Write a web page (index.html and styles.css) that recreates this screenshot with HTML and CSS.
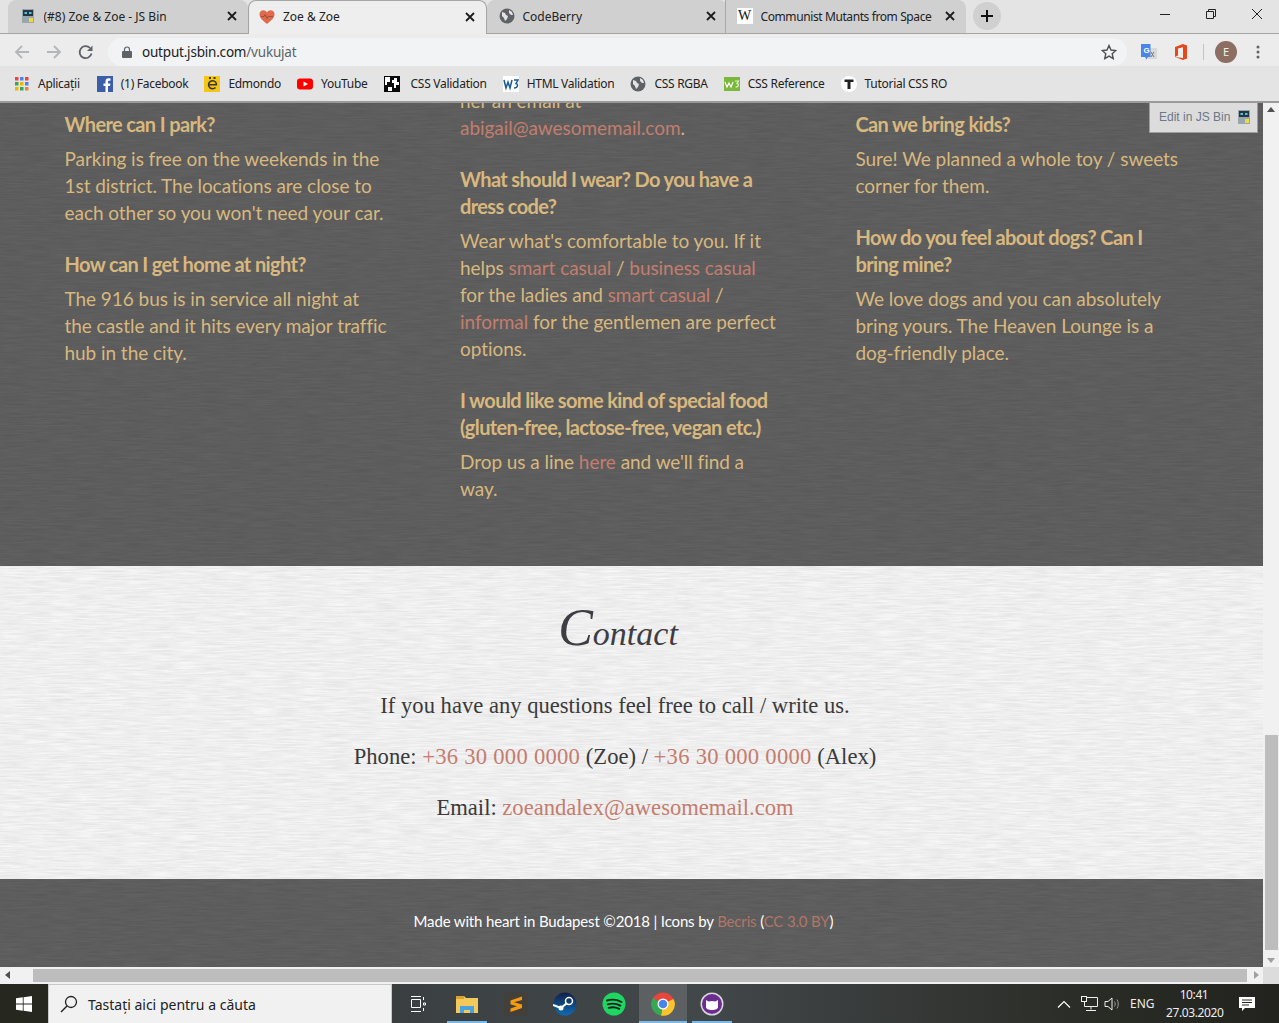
FILE: index.html
```html
<!DOCTYPE html>
<html lang="en">
<head>
<meta charset="utf-8">
<title>Zoe &amp; Zoe</title>
<link rel="stylesheet" href="styles.css">
</head>
<body>
<svg class="defs" width="0" height="0" aria-hidden="true">
  <defs>
    <filter id="paper" x="0" y="0" width="100%" height="100%">
      <feTurbulence type="fractalNoise" baseFrequency="0.04 0.6" numOctaves="3" seed="4"/>
      <feColorMatrix type="matrix" values="0 0 0 0 0  0 0 0 0 0  0 0 0 0 0  0.14 0 0 0 -0.03"/>
    </filter>
    <symbol id="globe" viewBox="0 0 16 16"><circle cx="8" cy="8" r="7.5" fill="#5f6368"/><path d="M3 4l3 1 1 2 2 1-1 3-2 2-1-3-2-2zM10 2l3 2 1 3-2 0-2-2z" fill="#e4e4e4"/></symbol>
    <symbol id="jsbin" viewBox="0 0 16 16"><rect x="2" y="1" width="12" height="14" fill="#98a6ae"/><rect x="3" y="2" width="10" height="6" fill="#26373f"/><rect x="4.500" y="4" width="2.500" height="2" fill="#4fc3e8"/><rect x="9" y="4" width="2.500" height="2" fill="#4fc3e8"/><rect x="9" y="10" width="4" height="4" fill="#f3d648"/></symbol>
    <symbol id="close" viewBox="0 0 10 10"><path d="M1 1l8 8M9 1l-8 8" stroke="#1c1c1c" stroke-width="1.800" fill="none"/></symbol>
  </defs>
</svg>
<div class="tabstrip">
  <div class="tab">
    <svg class="fav"><use href="#jsbin"/></svg>
    <span class="tab-title">(#8) Zoe &amp; Zoe - JS Bin</span>
    <svg class="tab-x"><use href="#close"/></svg>
  </div>
  <div class="tab tab-active">
    <svg class="fav" viewBox="0 0 16 16"><path d="M8 15C3 11 .5 8.500 .5 5.200 .5 2.800 2.300 1.200 4.300 1.200 5.800 1.200 7.200 2 8 3.300 8.800 2 10.200 1.200 11.700 1.200 13.700 1.200 15.500 2.800 15.500 5.200 15.500 8.500 13 11 8 15z" fill="#df6a4e"/><path d="M2 7.500h3l1-2 2 4 1-2h5" stroke="#8a4a3a" stroke-width=".8" fill="none"/></svg>
    <span class="tab-title">Zoe &amp; Zoe</span>
    <svg class="tab-x"><use href="#close"/></svg>
  </div>
  <div class="tab">
    <svg class="fav"><use href="#globe"/></svg>
    <span class="tab-title">CodeBerry</span>
    <svg class="tab-x"><use href="#close"/></svg>
  </div>
  <div class="tab tab-sep">
    <span class="fav fav-w">W</span>
    <span class="tab-title tab-tight">Communist Mutants from Space</span>
    <svg class="tab-x"><use href="#close"/></svg>
  </div>
  <div class="newtab"><svg viewBox="0 0 12 12" width="12" height="12"><path d="M6 0v12M0 6h12" stroke="#111" stroke-width="2"/></svg></div>
  <div class="winctl">
    <svg viewBox="0 0 46 16" class="winbtn"><path d="M18 8.500h10" stroke="#222" fill="none"/></svg>
    <svg viewBox="0 0 46 16" class="winbtn"><path d="M18.500 5.500h7v7h-7zM20.500 5V3.500h7v7H26" stroke="#222" fill="none"/></svg>
    <svg viewBox="0 0 46 16" class="winbtn"><path d="M18 3l10 10M28 3L18 13" stroke="#222" fill="none"/></svg>
  </div>
</div>
<div class="toolbar">
  <svg class="nav-ic" viewBox="0 0 16 16"><path d="M15 8H2M8 2L2 8l6 6" stroke="#b4b6b8" stroke-width="1.800" fill="none"/></svg>
  <svg class="nav-ic" viewBox="0 0 16 16"><path d="M1 8h13M8 2l6 6-6 6" stroke="#b4b6b8" stroke-width="1.800" fill="none"/></svg>
  <svg class="nav-ic" viewBox="0 0 16 16"><path d="M13.500 9.500A6 6 0 1 1 12 4" stroke="#5f6368" stroke-width="1.800" fill="none"/><path d="M14.500 1.500v5.500H9z" fill="#5f6368"/></svg>
  <div class="omnibox">
    <svg class="lock" viewBox="0 0 10 12"><path d="M2.500 5V3.500a2.500 2.500 0 0 1 5 0V5" stroke="#5f6368" stroke-width="1.200" fill="none"/><rect y="5" width="10" height="7" rx="1" fill="#5f6368"/></svg>
    <span class="url">output.jsbin.com<span class="url-path">/vukujat</span></span>
    <svg class="star" viewBox="0 0 16 16"><path d="M8 1.500l2 4.500 4.800.5-3.600 3.200 1 4.800L8 12.100 3.800 14.500l1-4.800L1.200 6.500 6 6z" stroke="#4d4f52" stroke-width="1.400" fill="none"/></svg>
  </div>
  <div class="ext">
    <svg class="ext-ic" viewBox="0 0 16 16"><rect x="7" y="4" width="9" height="11" fill="#d8d8d8"/><path d="M10 8l3 5M13 8l-3 5" stroke="#777" fill="none"/><path d="M0 0h9.500v13H7l-1.500 2.500L4 13H0z" fill="#4a86e8"/><text x="2.500" y="9" class="ext-g">G</text></svg>
    <svg class="ext-ic ext-office" viewBox="0 0 14 16"><path d="M1 3l8-3 4 1.500v13L9 16l-8-3 8 1V3.200L4 4.500v7L1 13z" fill="#e3491c"/></svg>
    <span class="ext-sep"></span>
    <span class="avatar">E</span>
    <svg class="menu" viewBox="0 0 4 16"><circle cx="2" cy="3" r="1.500" fill="#5f6368"/><circle cx="2" cy="8" r="1.500" fill="#5f6368"/><circle cx="2" cy="13" r="1.500" fill="#5f6368"/></svg>
  </div>
</div>
<div class="bookmarks">
  <div class="bm"><svg class="bm-ic bm-grid" viewBox="0 0 14 14"><g><rect width="3.500" height="3.500" fill="#e8453c"/><rect x="5" width="3.500" height="3.500" fill="#4a86e8"/><rect x="10" width="3.500" height="3.500" fill="#e8453c"/><rect y="5" width="3.500" height="3.500" fill="#34a853"/><rect x="5" y="5" width="3.500" height="3.500" fill="#f5b400"/><rect x="10" y="5" width="3.500" height="3.500" fill="#4a86e8"/><rect y="10" width="3.500" height="3.500" fill="#f5b400"/><rect x="5" y="10" width="3.500" height="3.500" fill="#34a853"/><rect x="10" y="10" width="3.500" height="3.500" fill="#e8853c"/></g></svg><span class="bm-first">Aplicații</span></div>
  <div class="bm"><svg class="bm-ic" viewBox="0 0 16 16"><rect width="16" height="16" fill="#3b5ea8"/><path d="M11 16V10h2l.4-2.500H11V6c0-.8.300-1.300 1.300-1.300h1.200V2.500C13 2.400 12.300 2.300 11.500 2.300 9.700 2.300 8.500 3.400 8.500 5.500v2H6.500V10h2v6z" fill="#fff"/></svg>(1) Facebook</div>
  <div class="bm"><svg class="bm-ic" viewBox="0 0 16 16"><rect width="16" height="16" fill="#f5c518"/><path d="M11.500 11.500a4 4 0 1 1 0-5.500c.7.900 1 1.700.9 2.800H4.500" stroke="#3a3a1a" stroke-width="1.600" fill="none"/><path d="M5 1h2v2H5zM9.500 1h2v2h-2z" fill="#3a3a1a"/></svg>Edmondo</div>
  <div class="bm"><svg class="bm-ic" viewBox="0 0 16 16"><rect y="2.500" width="16" height="11" rx="3" fill="#f00"/><path d="M6.500 5.500v5L11 8z" fill="#fff"/></svg>YouTube</div>
  <div class="bm bm-wide"><svg class="bm-ic" viewBox="0 0 16 16"><rect width="16" height="16" fill="#0a0a0a"/><path d="M1 1h5v5H3v3H1zM10 2h3v4h2v3h-3v3h-2V7H8V4h2zM4 11h4v4H4z" fill="#fff"/></svg>CSS Validation</div>
  <div class="bm"><svg class="bm-ic" viewBox="0 0 16 16"><rect width="16" height="16" fill="#fff"/><path d="M1 4l2 8 2-6 2 6 2-8M11 4h4l-2 3.500c2 0 2.500 4.500-2 4.500" stroke="#1a5a96" stroke-width="1.500" fill="none"/></svg>HTML Validation</div>
  <div class="bm"><svg class="bm-ic" viewBox="0 0 16 16"><use href="#globe"/></svg>CSS RGBA</div>
  <div class="bm"><svg class="bm-ic" viewBox="0 0 16 16"><rect y="1" width="16" height="14" fill="#7cb83c"/><path d="M1 6l2 5 2-4 2 4 2-5" stroke="#fff" stroke-width="1.200" fill="none"/><path d="M11 5h3.500l-1.500 2.500c2 0 2 4-1.500 3.500" stroke="#e4f0d0" stroke-width="1.200" fill="none"/></svg>CSS Reference</div>
  <div class="bm"><svg class="bm-ic" viewBox="0 0 16 16"><circle cx="8" cy="8" r="8" fill="#fff"/><path d="M3.500 3.500h9v2.500h-3v7h-3V6h-3z" fill="#222"/></svg>Tutorial CSS RO</div>
</div>
<div class="browser">
  <div class="viewport">
    <main class="page">
      <section class="faq">
        <svg class="texture"><rect width="100%" height="100%" filter="url(#paper)"/></svg>
        <div class="faq-col faq-col-offset">
          <h3 class="q">Where can I park?</h3>
          <p class="a">Parking is free on the weekends in the<br>1st district. The locations are close to<br>each other so you won't need your car.</p>
          <h3 class="q">How can I get home at night?</h3>
          <p class="a">The 916 bus is in service all night at<br>the castle and it hits every major traffic<br>hub in the city.</p>
        </div>
        <div class="faq-col">
          <p class="a">her an email at<br><a class="link" href="#">abigail@awesomemail.com</a>.</p>
          <h3 class="q">What should I wear? Do you have a<br>dress code?</h3>
          <p class="a">Wear what's comfortable to you. If it<br>helps <a class="link" href="#">smart casual</a> / <a class="link" href="#">business casual</a><br>for the ladies and <a class="link" href="#">smart casual</a> /<br><a class="link" href="#">informal</a> for the gentlemen are perfect<br>options.</p>
          <h3 class="q">I would like some kind of special food<br>(gluten-free, lactose-free, vegan etc.)</h3>
          <p class="a">Drop us a line <a class="link" href="#">here</a> and we'll find a<br>way.</p>
        </div>
        <div class="faq-col faq-col-offset">
          <h3 class="q">Can we bring kids?</h3>
          <p class="a">Sure! We planned a whole toy / sweets<br>corner for them.</p>
          <h3 class="q">How do you feel about dogs? Can I<br>bring mine?</h3>
          <p class="a">We love dogs and you can absolutely<br>bring yours. The Heaven Lounge is a<br>dog-friendly place.</p>
        </div>
      </section>
      <section class="contact">
        <svg class="texture texture-light"><rect width="100%" height="100%" filter="url(#paper)"/></svg>
        <h2 class="contact-title"><span class="contact-c">C</span>ontact</h2>
        <p class="contact-line">If you have any questions feel free to call / write us.</p>
        <p class="contact-line">Phone: <a class="link phone" href="#">+36 30 000 0000</a> (Zoe) / <a class="link phone" href="#">+36 30 000 0000</a> (Alex)</p>
        <p class="contact-line">Email: <a class="link" href="#">zoeandalex@awesomemail.com</a></p>
      </section>
      <footer class="foot">
        <svg class="texture"><rect width="100%" height="100%" filter="url(#paper)"/></svg>
        <p class="foot-text">Made with heart in Budapest ©2018 | Icons by <a class="foot-link" href="#">Becris</a> (<a class="foot-link" href="#">CC 3.0 BY</a>)</p>
      </footer>
    </main>
    <div class="jsbin-edit">Edit in JS Bin<svg class="jsbin-ic"><use href="#jsbin"/></svg></div>
  </div>
  <div class="vbar">
    <span class="arrow arrow-up"></span>
    <span class="vthumb"></span>
    <span class="arrow arrow-down"></span>
  </div>
  <div class="hbar">
    <span class="arrow arrow-left"></span>
    <span class="hthumb"></span>
    <span class="arrow arrow-right"></span>
  </div>
  <div class="corner"></div>
</div>
<div class="taskbar">
  <div class="start"><svg viewBox="0 0 16 16" width="16" height="16"><path d="M0 2.300l6.800-1v6.300H0zM7.600 1.200L16 0v7.600H7.600zM0 8.400h6.800v6.400l-6.800-1zM7.600 8.400H16V16l-8.400-1.200z" fill="#fff"/></svg></div>
  <div class="search">
    <svg viewBox="0 0 18 18" width="18" height="18"><circle cx="11" cy="7" r="5.500" stroke="#222" stroke-width="1.300" fill="none"/><path d="M7 11l-6 6" stroke="#222" stroke-width="1.500"/></svg>
    <span>Tastați aici pentru a căuta</span>
  </div>
  <div class="tb-icons">
    <div class="tb-icon"><svg viewBox="0 0 16 16" width="16" height="16"><path d="M1 .5h10M1 15.500h10M1.500 3.500h9v8h-9zM13.500 1v3M13.500 7h2v2h-2zM13.500 12v3" stroke="#fff" fill="none"/></svg></div>
    <div class="tb-icon tb-on"><svg viewBox="0 0 22 18" width="22" height="18"><path d="M0 1h8l2 2h12v15H0z" fill="#f3c95c"/><path d="M0 1h8v3H0z" fill="#d9a12e"/><path d="M4 11h14v7h-4v-3H8v3H4z" fill="#4aa3e0"/></svg></div>
    <div class="tb-icon"><svg viewBox="0 0 24 24" width="24" height="24"><rect width="24" height="24" rx="1" fill="#43403c"/><path d="M18 4.500L6.500 8.500v3.800l11.500 3.800v-3.500L10 10.300l8-2.300zM18 12.500L6.500 16.500v3.500L18 16z" fill="#f79a10"/></svg></div>
    <div class="tb-icon"><svg viewBox="0 0 24 24" width="24" height="24"><defs><linearGradient id="st" x1="0" y1="0" x2="0" y2="1"><stop offset="0" stop-color="#12204a"/><stop offset="1" stop-color="#0f6bb0"/></linearGradient></defs><circle cx="12" cy="12" r="11.500" fill="url(#st)"/><circle cx="16" cy="9" r="3.500" fill="none" stroke="#fff" stroke-width="1.500"/><circle cx="8" cy="16" r="2.500" fill="#fff"/><path d="M0 13l8 3 6-5" stroke="#fff" stroke-width="2" fill="none"/></svg></div>
    <div class="tb-icon"><svg viewBox="0 0 24 24" width="24" height="24"><circle cx="12" cy="12" r="11.500" fill="#1ed760"/><path d="M5 8.500c5-1.500 10-1 14.500 1.500M5.800 12.300c4.500-1.200 8.700-.8 12.500 1.300M6.700 15.800c3.800-1 7.300-.7 10.500 1" stroke="#122" stroke-width="1.900" fill="none" stroke-linecap="round"/></svg></div>
    <div class="tb-icon tb-active"><svg viewBox="0 0 24 24" width="24" height="24"><circle cx="12" cy="12" r="11.500" fill="#e8453c"/><path d="M12 12L22.500 7A11.500 11.500 0 0 1 10 23.500z" fill="#f7c42f"/><path d="M12 12L10 23.500A11.500 11.500 0 0 1 2 6z" fill="#34a853"/><circle cx="12" cy="12" r="5.500" fill="#fff"/><circle cx="12" cy="12" r="4.300" fill="#4a86e8"/></svg></div>
    <div class="tb-icon tb-on"><svg viewBox="0 0 24 24" width="24" height="24"><circle cx="12" cy="12" r="11.500" fill="#d8d8d8"/><circle cx="12" cy="12" r="10" fill="#6e2c91"/><path d="M6 8l2.500 1.500c2-.7 5-.7 7 0L18 8v7c0 2-2.500 3-6 3s-6-1-6-3z" fill="#fff"/></svg></div>
  </div>
  <div class="tray">
    <svg class="tray-chev" viewBox="0 0 14 8" width="14" height="8"><path d="M1 7.500L7 1.500l6 6" stroke="#fff" stroke-width="1.200" fill="none"/></svg>
    <svg class="tray-net" viewBox="0 0 17 16" width="17" height="16"><path d="M3.500 1.500h13v9h-13zM10 10.500v3M5 14.500h10" stroke="#eee" fill="none"/><rect x=".5" y=".5" width="5" height="5" fill="#26261f" stroke="#eee"/></svg>
    <svg class="tray-vol" viewBox="0 0 17 16" width="17" height="16"><path d="M1 5.500h3l4-3.500v12l-4-3.500H1z" stroke="#eee" fill="none"/><path d="M10.500 5.500c1 1.500 1 3.500 0 5M13 3.500c1.700 2.500 1.700 6.500 0 9" stroke="#999" fill="none"/></svg>
    <span class="tray-lang">ENG</span>
    <span class="tray-time">10:41<br>27.03.2020</span>
    <svg class="tray-note" viewBox="0 0 16 16" width="16" height="16"><path d="M0 1h16v11H6l-3 3v-3H0z" fill="#fff"/><path d="M3 4h10M3 6.500h10M3 9h7" stroke="#26261f"/></svg>
  </div>
</div>
</body>
</html>
```
FILE: styles.css
```css
* { box-sizing: border-box; }
html, body { margin: 0; padding: 0; }
body { width: 1279px; height: 1023px; overflow: hidden; font-family: "Noto Sans", "Open Sans", sans-serif; background: #e4e4e4; }
.defs { position: absolute; }

/* tab strip */
.tabstrip { height: 34px; display: flex; align-items: flex-end; padding-left: 8px; background: #e4e4e4; border-bottom: 1px solid #a5a5a5; }
.tab { width: 239.500px; height: 33px; display: flex; align-items: center; padding: 0 10px 1px 11.500px; background: #d0d0d0; font-size: 12px; color: #222; border-radius: 8px 8px 0 0; }
.tab-active { background: #eeeeee; height: 34px; margin-bottom: -1px; border: 1px solid #a5a5a5; border-bottom: 0; padding: 0 10px 2px 10.500px; }
.tab-sep { padding-left: 10.500px; border-left: 1px solid #a8a8a8; border-radius: 0 8px 0 0; width: 240.500px; margin-left: -1.500px; }
.fav { width: 16px; height: 16px; flex: none; display: block; }
.fav-w { background: #fff; color: #111; font: 14px/16px "Liberation Serif", serif; text-align: center; }
.tab-title { margin-left: 8px; flex: 1; white-space: nowrap; overflow: hidden; }
.tab-tight { letter-spacing: -.4px; }
.tab-x { width: 10px; height: 10px; flex: none; margin-right: 1px; }
.newtab { width: 28px; height: 28px; border-radius: 50%; background: #d0d0d0; display: flex; align-items: center; justify-content: center; margin: 0 0 3px 7px; }
.winctl { margin-left: auto; margin-right: -1px; display: flex; align-self: flex-start; padding-top: 6px; }
.winbtn { width: 46px; height: 16px; display: block; }

/* toolbar */
.toolbar { height: 32px; background: #ececec; display: flex; align-items: center; padding: 4px 0 0 14px; }
.nav-ic { width: 16px; height: 16px; margin-right: 16px; flex: none; }
.omnibox { width: 1019px; margin-left: -2px; height: 28px; border-radius: 14px; background: #f1f3f4; display: flex; align-items: center; padding: 0 10px 0 14px; }
.lock { width: 10px; height: 12px; flex: none; }
.url { margin-left: 10px; font-size: 13.500px; letter-spacing: -.2px; color: #202124; flex: 1; }
.url-path { color: #5f6368; }
.star { width: 16px; height: 16px; flex: none; }
.ext { display: flex; align-items: center; margin-left: 14px; }
.ext-ic { width: 16px; height: 16px; flex: none; }
.ext-office { margin-left: 16px; }
.ext-g { font: 700 8px "Liberation Sans", sans-serif; fill: #fff; }
.ext-sep { width: 1px; height: 16px; background: #c4c4c4; margin: 0 11px 0 14px; }
.avatar { width: 22px; height: 22px; border-radius: 50%; background: #8d6e63; color: #f3eeea; font-size: 11px; line-height: 22px; text-align: center; }
.menu { width: 4px; height: 16px; margin-left: 19px; }

/* bookmarks */
.bookmarks { height: 37px; background: #e4e4e4; border-bottom: 2px solid #9a9a9a; display: flex; align-items: center; gap: 16px; padding: 0 0 0 15px; font-size: 12px; letter-spacing: -.28px; color: #222; }
.bm { display: flex; align-items: center; gap: 8px; white-space: nowrap; }
.bm-wide { gap: 11px; }
.bm-first { margin-right: 1px; }
.bm-ic { width: 16px; height: 16px; flex: none; display: block; }
.bm-grid { width: 14px; height: 14px; margin-right: 1px; }

/* page window */
.browser { height: 881px; display: grid; grid-template-columns: 1263px 16px; grid-template-rows: 864px 17px; }
.viewport { position: relative; overflow: hidden; }
.page { margin-top: -16px; }

.texture { position: absolute; inset: 0; width: 100%; height: 100%; pointer-events: none; }
.texture-light { opacity: .8; }

/* faq */
.faq { position: relative; background: #616161; display: grid; grid-template-columns: repeat(3, 395.500px); padding: 0 0 40px 64.500px; font-family: Lato, "Noto Sans", sans-serif; color: #d8b87e; }
.faq-col { position: relative; }
.faq-col-offset { padding-top: 23px; }
.q { margin: 0 0 7px; padding-top: 1px; font-size: 20px; line-height: 27px; font-weight: 700; letter-spacing: -.63px; white-space: nowrap; }
.a { margin: 0 0 24px; font-size: 19px; line-height: 27px; letter-spacing: -.05px; white-space: nowrap; }
.link { color: #c47d6e; text-decoration: none; }

/* contact */
.contact { position: relative; height: 313px; background: #f6f6f6; padding: 0 33px 0 0; text-align: center; color: #3a3a3a; font-family: "Liberation Serif", serif; }
.contact-title { position: relative; margin: 0; height: 126px; padding: 32px 0 0 6px; font-size: 34px; line-height: 60px; font-style: italic; font-weight: 400; color: #3d3d44; }
.contact-c { font-size: 52px; }
.contact-line { position: relative; margin: 0 0 23px; font-size: 22.600px; line-height: 28px; }
.phone { letter-spacing: .27px; }

/* footer */
.foot { position: relative; height: 88px; background: #616161; padding: 29px 16px 0 0; text-align: center; font-family: Lato, "Noto Sans", sans-serif; font-size: 15px; letter-spacing: -.15px; line-height: 26px; color: #fff; }
.foot-text { position: relative; margin: 0; }
.foot-link { color: #b27666; text-decoration: none; }

/* overlay */
.jsbin-edit { position: absolute; top: 0; left: 1149px; width: 109px; height: 30px; background: #dcdcdc; border: 1px solid #9e9e9e; border-top: 0; display: flex; align-items: center; justify-content: space-between; padding: 0 5px 2px 9px; font: 12px "Liberation Sans", sans-serif; color: #6b7885; }
.jsbin-ic { width: 16px; height: 16px; }

/* scrollbars */
.vbar { position: relative; background: #f1f1f1; }
.vthumb { position: absolute; left: 2px; right: 1px; top: 632px; height: 215px; background: #bdbdbd; }
.hbar { position: relative; background: #f1f1f1; }
.hthumb { position: absolute; left: 33px; right: 16px; top: 2px; height: 13px; background: #bdbdbd; }
.corner { background: #dcdcdc; }
.arrow { position: absolute; width: 0; height: 0; border: 4px solid transparent; }
.arrow-up { left: 4px; top: 4px; border-bottom: 5px solid #505050; border-top: 0; }
.arrow-down { left: 4px; bottom: 4px; border-top: 5px solid #a0a0a0; border-bottom: 0; }
.arrow-left { left: 5px; top: 4px; border-right: 5px solid #505050; border-left: 0; }
.arrow-right { right: 4px; top: 4px; border-left: 5px solid #a0a0a0; border-right: 0; }

/* taskbar */
.taskbar { height: 39px; display: flex; align-items: stretch; background: linear-gradient(90deg, #26271f 0%, #3c4144 35%, #42474a 55%, #2a2c26 85%, #22231e 100%); color: #fff; }
.start { width: 48px; display: flex; align-items: center; justify-content: center; background: #26271f; }
.search { width: 344px; background: #f1f1f1; border: 1px solid #c8c8c8; border-bottom: 0; display: flex; align-items: center; gap: 10px; padding-left: 11px; color: #222; font-size: 14px; }
.tb-icons { display: flex; padding-left: 1px; }
.tb-icon { width: 48px; margin: 0 .5px; display: flex; align-items: center; justify-content: center; }
.tb-on { background: linear-gradient(#76b9ed, #76b9ed) center bottom / 40px 2px no-repeat; }
.tb-active { background: linear-gradient(#76b9ed, #76b9ed) center bottom / 48px 2px no-repeat, #5c6063; }
.tray { margin-left: auto; display: flex; align-items: center; padding-right: 24px; font-size: 12px; color: #eee; }
.tray svg { flex: none; }
.tray .tray-chev { margin-right: 9.500px; }
.tray .tray-net { margin-right: 6px; }
.tray .tray-vol { margin-right: 9.500px; }
.tray-lang { width: 25px; margin-right: 11px; white-space: nowrap; }
.tray-time { width: 56px; text-align: center; line-height: 18px; letter-spacing: -.4px; margin-right: 17px; white-space: nowrap; }
```
